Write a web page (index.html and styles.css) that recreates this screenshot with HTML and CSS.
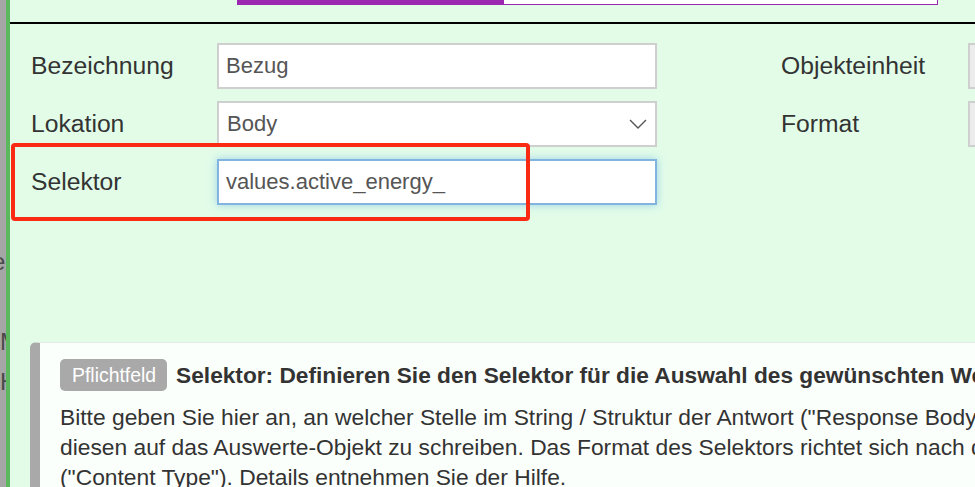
FILE: index.html
```html
<!DOCTYPE html>
<html lang="de">
<head>
<meta charset="utf-8">
<title>Selektor</title>
<link rel="stylesheet" href="styles.css">
</head>
<body>
<div class="page">
  <aside class="sidebar">
    <span class="sb-item sb-first">e</span>
    <span class="sb-item"></span>
    <span class="sb-item">M</span>
    <span class="sb-item">H</span>
  </aside>
  <main class="main">
    <div class="progress">
      <div class="progress-fill"></div>
      <div class="progress-rest"></div>
    </div>
    <div class="divider"></div>

    <div class="form">
      <div class="col col-left">
        <label class="label">Bezeichnung</label>
        <div class="input">Bezug</div>
        <label class="label">Lokation</label>
        <div class="input select">
          <span>Body</span>
          <svg class="chevron" width="18" height="10" viewBox="0 0 18 10"><path d="M1 1 L9 9 L17 1" fill="none" stroke="#555" stroke-width="1.4"/></svg>
        </div>
        <label class="label">Selektor</label>
        <div class="input focus">values.active_energy_</div>
      </div>
      <div class="col col-right">
        <label class="label">Objekteinheit</label>
        <div class="input disabled"></div>
        <label class="label">Format</label>
        <div class="input disabled"></div>
      </div>
    </div>

    <section class="help">
      <div class="help-title">
        <span class="badge">Pflichtfeld</span>
        <strong>Selektor: Definieren Sie den Selektor für die Auswahl des gewünschten Wertes</strong>
      </div>
      <p class="help-text">Bitte geben Sie hier an, an welcher Stelle im String / Struktur der Antwort ("Response Body") sich der gewünschte Wert befindet, um<br>diesen auf das Auswerte-Objekt zu schreiben. Das Format des Selektors richtet sich nach dem Inhaltstyp der Antwort<br>("Content Type"). Details entnehmen Sie der Hilfe.</p>
    </section>

    <div class="annotation"></div>
  </main>
</div>
</body>
</html>
```

FILE: styles.css
```css
* { box-sizing: border-box; }

html, body {
  margin: 0;
  padding: 0;
  height: 100%;
  overflow: hidden;
}

body {
  background: #e2fce8;
  font-family: "Liberation Sans", Arial, Helvetica, sans-serif;
  color: #333;
}

.page {
  display: flex;
  height: 487px;
}

.sidebar {
  width: 6px;
  flex: 0 0 6px;
  background: #a6a6a6;
  overflow: hidden;
  display: flex;
  flex-direction: column;
  padding-top: 242px;
  color: #4a4a4a;
  font-size: 24px;
}

.sb-item {
  display: block;
  height: 40px;
  line-height: 40px;
  white-space: nowrap;
}

.sb-first {
  margin-left: -8px;
}

.main {
  position: relative;
  flex: 1;
  border-left: 4px solid #5cb85c;
  overflow: hidden;
}

.progress {
  display: flex;
  margin-left: 227px;
  width: 701px;
  height: 5px;
}

.progress-fill {
  width: 267px;
  background: #9c27b0;
}

.progress-rest {
  flex: 1;
  background: #fff;
  border-right: 1px solid #9c27b0;
  border-bottom: 1px solid #9c27b0;
}

.divider {
  margin-top: 17px;
  height: 2px;
  background: #000;
}

.form {
  display: flex;
  padding: 19px 0 0 21px;
}

.col {
  display: grid;
  grid-auto-rows: 46px;
  row-gap: 12px;
  align-items: center;
}

.col-left {
  grid-template-columns: 186px 440px;
}

.col-right {
  margin-left: 124px;
  grid-template-columns: 187px 200px;
}

.label {
  font-size: 24.7px;
  color: #333;
  white-space: nowrap;
}

.input {
  height: 46px;
  background: #fff;
  border: 2px solid #cfcfcf;
  padding: 0 7px;
  font-size: 22px;
  color: #555;
  display: flex;
  align-items: center;
  white-space: nowrap;
}

.select {
  justify-content: space-between;
  padding: 0 8px 0 8px;
}

.chevron {
  display: block;
}

.focus {
  border-color: #82b4e0;
  box-shadow: 0 0 8px rgba(102, 175, 233, 0.55);
}

.disabled {
  background: #ececec;
  border-color: #cfcfcf;
}

.help {
  margin: 137px 0 0 20px;
  width: 1200px;
  background: #fbfffc;
  border-left: 10px solid #a9a9a9;
  border-top: 1px solid #e4ebe6;
  border-top-left-radius: 6px;
  padding: 16px 0 0 20px;
}

.help-title {
  display: flex;
  align-items: center;
  gap: 9px;
  height: 32px;
  white-space: nowrap;
  font-size: 22.7px;
  color: #333;
}

.badge {
  display: inline-flex;
  align-items: center;
  height: 32px;
  padding: 0 11px 0 12px;
  background: #a9a9a9;
  color: #fff;
  font-size: 19.4px;
  border-radius: 5px;
}

.help-text {
  margin: 11px 0 0 0;
  font-size: 22.8px;
  line-height: 30px;
  color: #333;
  white-space: nowrap;
}

.annotation {
  position: absolute;
  left: 1px;
  top: 143px;
  width: 519px;
  height: 78px;
  border: 4px solid #fb2a12;
  border-radius: 4px;
  pointer-events: none;
}
```
